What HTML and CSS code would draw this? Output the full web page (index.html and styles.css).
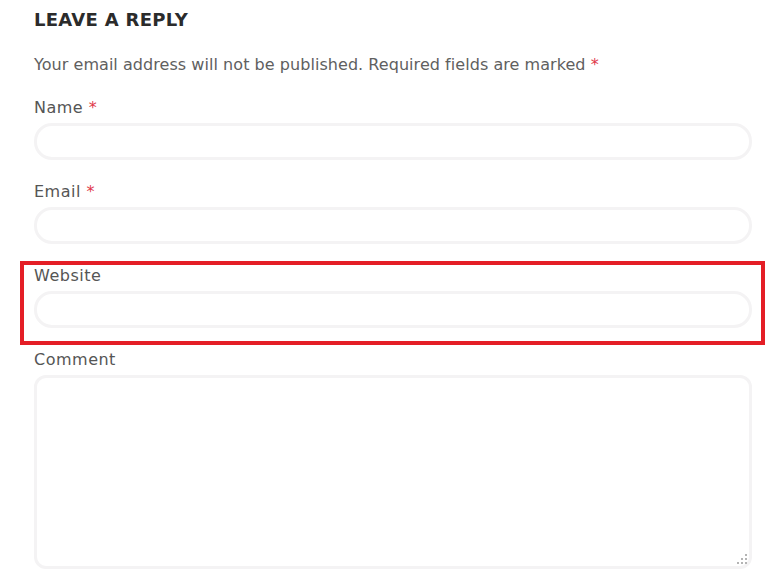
FILE: index.html
```html
<!DOCTYPE html>
<html lang="en">
<head>
<meta charset="UTF-8" />
<title>Leave a Reply</title>
<link rel="stylesheet" href="styles.css">
</head>
<body>

<div class="respond">
  <h3 class="reply-title">LEAVE A REPLY</h3>
  <p class="notes">Your email address will not be published. Required fields are marked <span class="req">*</span></p>

  <div class="field">
    <label for="author">Name <span class="req">*</span></label>
    <input type="text" id="author" />
  </div>

  <div class="field">
    <label for="email">Email <span class="req">*</span></label>
    <input type="text" id="email" />
  </div>

  <div class="field highlight">
    <label for="url">Website</label>
    <input type="text" id="url" />
  </div>

  <div class="field">
    <label for="comment">Comment</label>
    <div class="textarea-wrap">
      <textarea id="comment"></textarea>
      <span class="grip"></span>
    </div>
  </div>
</div>

</body>
</html>
```

FILE: styles.css
```css
body { margin: 0; background: #fff; font-family: 'DejaVu Sans', 'Noto Sans', sans-serif; color: #5a5a5a; }
.respond { width: 718px; padding: 10px 0 0 34px; }
.reply-title { margin: 0; font-size: 18px; line-height: 20px; font-weight: bold; color: #2b2b2b; letter-spacing: 0.3px; }
.notes { margin: 25px 0 0; font-size: 16px; line-height: 20px; color: #606060; letter-spacing: 0.05px; }
.req { color: #e0394a; }
.field { margin-bottom: 22px; }
.notes + .field { margin-top: 23px; }
label { display: block; font-size: 16px; line-height: 20px; color: #555; margin-bottom: 5px; letter-spacing: 0.5px; }
input, textarea { display: block; box-sizing: border-box; width: 100%; border: 3px solid #f4f3f4; background: #fff; outline: none; font: inherit; }
input { height: 37px; border-radius: 18px; }
textarea { height: 194px; border-radius: 12px; resize: none; }
.textarea-wrap { position: relative; }
.grip { position: absolute; right: 5px; bottom: 5px; width: 10px; height: 10px; }
.grip::before { content: ""; position: absolute; right: 0; bottom: 0; width: 2px; height: 2px; background: #b4b4b4;
  box-shadow: -4px 0 #b4b4b4, -8px 0 #b4b4b4, 0 -4px #b4b4b4, -4px -4px #b4b4b4, 0 -8px #b4b4b4; }
.highlight { margin: -5px -13px 5px -14px; padding: 1px 9px 13px 10px; border: 4px solid #e41e26; }
```
